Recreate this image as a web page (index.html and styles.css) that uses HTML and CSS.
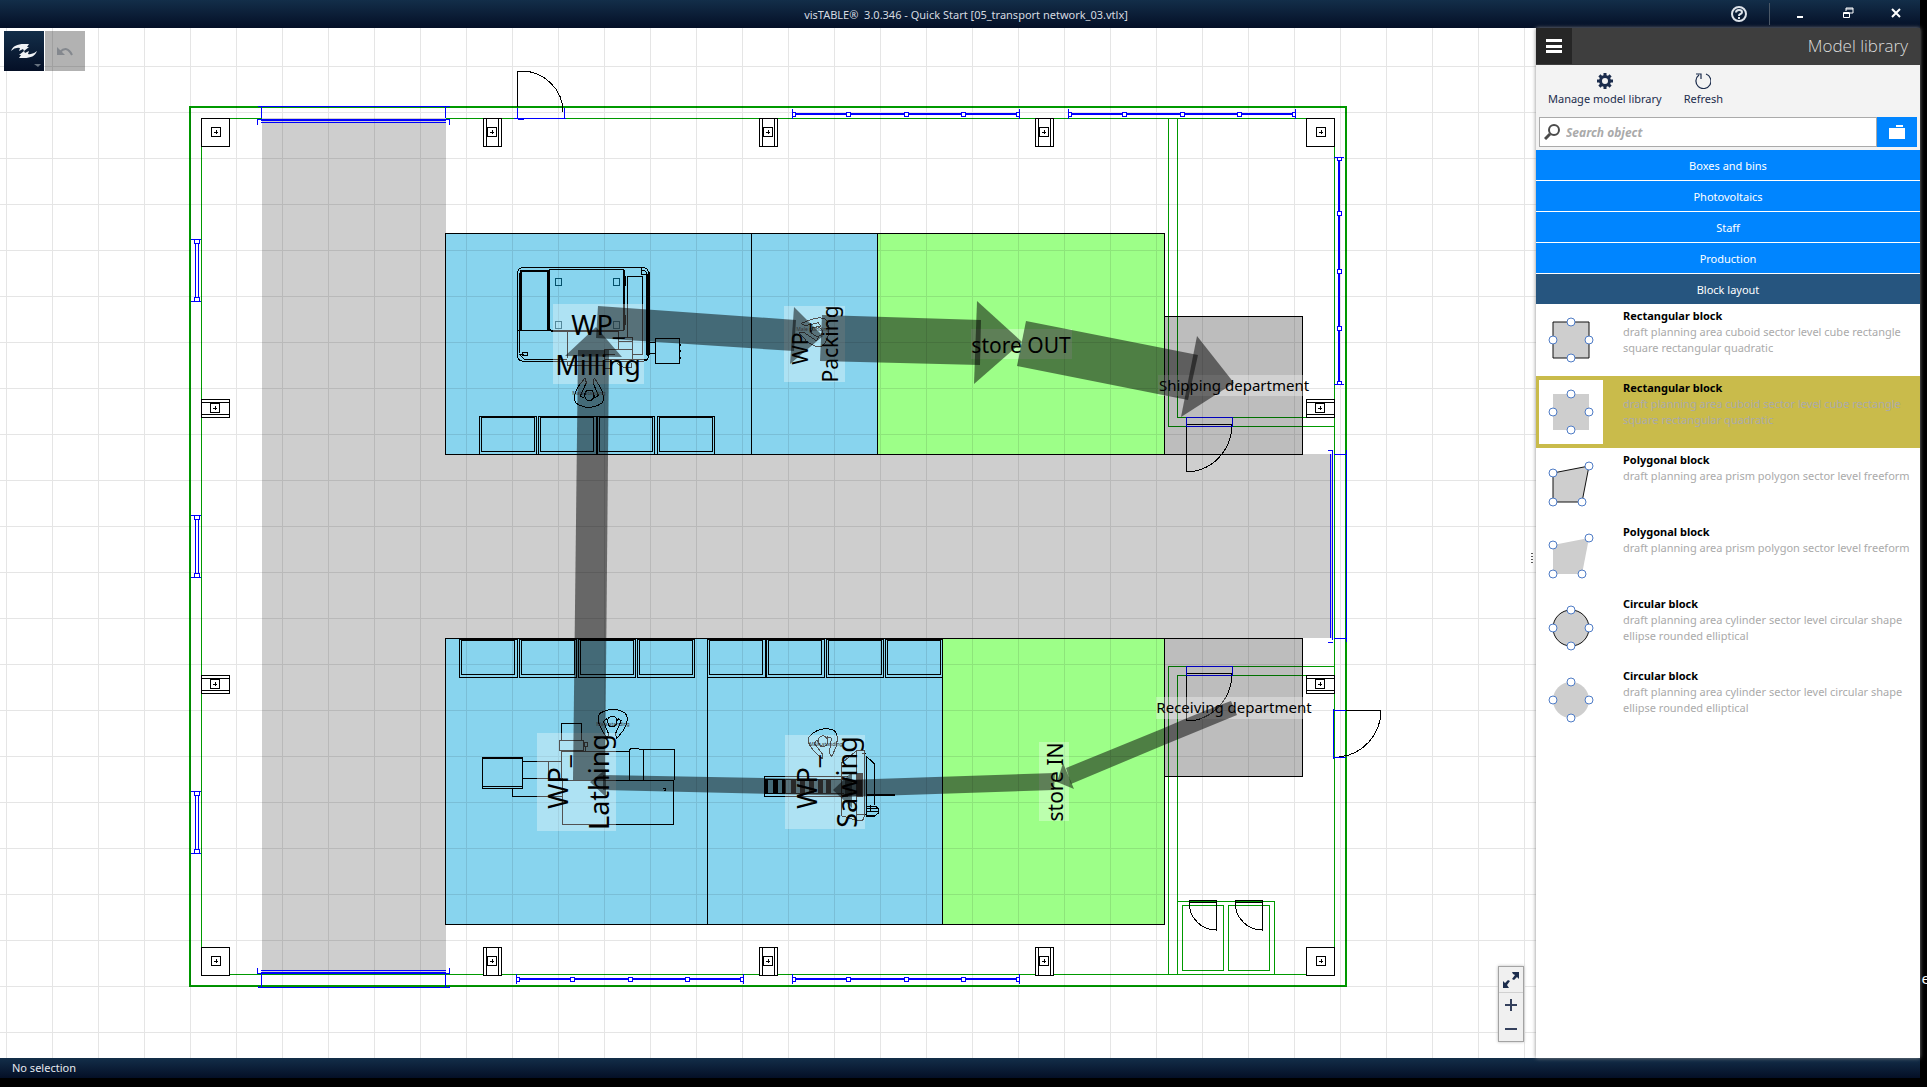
FILE: index.html
```html
<!DOCTYPE html>
<html lang="en">
<head>
    <meta charset="UTF-8">
    <title>visTABLE - Quick Start</title>
    <link rel="stylesheet" href="styles.css">
</head>
<body>
<div class="app">
    <header class="titlebar">
        <h1 class="title">visTABLE® &nbsp;3.0.346 - Quick Start [05_transport network_03.vtlx]</h1>
        <div class="window-buttons">
            <button class="help" aria-label="Help">
                <svg width="18" height="18" viewBox="0 0 18 18"><circle cx="9" cy="9" r="7" fill="none" stroke="#dde3ea" stroke-width="2"/><path d="M6 7.500Q6 5 9 5T12 7.300Q12 8.500 10 9.300Q9 9.700 9 11" fill="none" stroke="#dde3ea" stroke-width="2"/><rect x="8" y="12" width="2" height="2" fill="#dde3ea"/></svg>
            </button>
            <span class="divider"></span>
            <button class="win" aria-label="Minimize"><svg width="12" height="12"><path d="M3 9h6v2h-6z" fill="#fff"/></svg></button>
            <button class="win" aria-label="Restore"><svg width="12" height="12" fill="none" stroke="#fff"><path d="M4 4V1h7v5h-3M4 2h7M1.500 5.500h6v5h-6zM1 6.500h7"/></svg></button>
            <button class="win" aria-label="Close"><svg width="12" height="12"><path d="M2 2l8 8M10 2l-8 8" stroke="#fff" stroke-width="2"/></svg></button>
        </div>
    </header>

    <main class="workspace">
        <section class="canvas">
            <svg class="plan" width="100%" height="100%">
                <defs>
                    <pattern id="grid" x="6" y="20" width="46" height="46" patternUnits="userSpaceOnUse">
                        <path d="M0 0h46v1h-45v45h-1z" fill="#000" fill-opacity=".1"/>
                    </pattern>
                    <symbol id="core" overflow="visible"><rect x="-5" y="-5" width="9" height="9"/><path d="M-2 0h4M0 -2v4"/></symbol>
                    <symbol id="corner" overflow="visible"><rect x="-15" y="-14" width="28" height="28" fill="#fff"/><use href="#core"/></symbol>
                    <symbol id="post" overflow="visible"><rect x="-9" y="-14" width="18" height="28" fill="#fff"/><path d="M-6 -14v28M6 -14v28"/><use href="#core"/></symbol>
                    <symbol id="post-h" overflow="visible"><rect x="-14" y="-9" width="28" height="18" fill="#fff"/><path d="M-14 -6h28M-14 6h28"/><use href="#core"/></symbol>
                    <symbol id="window" overflow="visible">
                        <path d="M0 -5v10M227 -5v10"/><path d="M2 0h223" stroke-width="2"/>
                        <path d="M0 -2h3v4h-3zM54 -2h4v4h-4zM112 -2h4v4h-4zM169 -2h4v4h-4zM224 -2h3v4h-3z" fill="#fff"/>
                    </symbol>
                    <symbol id="window-s" overflow="visible"><path d="M-6 0h10M-6 62h10M-3 0v4h5v-4M-3 62v-4h5v4M-2 4h3v54h-3z"/></symbol>
                    <symbol id="person" overflow="visible"><path d="M32 0L12 25Q-8 60 6 76Q42 100 82 76Q96 60 76 25L60 0M32 0l4 14l-18 40l10 6l10 -25M60 0l-4 14l16 38l-10 8l-8 -25"/><ellipse cx="45" cy="52" rx="14" ry="16"/></symbol>
                    <symbol id="box" overflow="visible"><rect width="172" height="114"/><rect x="6" y="4" width="158" height="102"/></symbol>
                </defs>

                <g class="page" transform="translate(0 -28)">
                    <!-- walls -->
                    <g class="wall">
                        <rect x="190" y="107" width="1156" height="879" stroke-width="2"/>
                        <rect x="201" y="118" width="1133" height="856"/>
                        <path d="M1168 118V426H1334M1177 118V417H1334M1168 974V666H1334M1177 974V675H1334"/>
                        <path d="M1177 901H1274V974M1182 905h41v65h-41zM1228 905h41v65h-41z"/>
                    </g>
                    <path d="M1186 424V472A46 48 0 0 0 1232 424zM1186 673V721A46 48 0 0 0 1232 673z" class="ink"/>
                    <path d="M1186 417h46v9h-46zM1186 666h46v9h-46z" class="blue"/>

                    <!-- areas -->
                    <path d="M262 118H446V454H1333V638H446V974H262z" fill="#cecece"/>
                    <g class="area">
                        <rect x="445" y="233" width="306" height="221" class="work"/>
                        <rect x="751" y="233" width="126" height="221" class="work"/>
                        <rect x="877" y="233" width="287" height="221" class="store"/>
                        <rect x="1164" y="316" width="138" height="138" class="dept"/>
                        <rect x="445" y="638" width="262" height="286" class="work"/>
                        <rect x="707" y="638" width="235" height="286" class="work"/>
                        <rect x="942" y="638" width="222" height="286" class="store"/>
                        <rect x="1164" y="638" width="138" height="138" class="dept"/>
                    </g>
                    <path d="M1186 454V472A46 48 0 0 0 1222 454" class="ink"/>
                    <rect y="28" width="1536" height="1030" fill="url(#grid)"/>

                    <!-- gates -->
                    <g class="blue">
                        <path d="M258 107v-1h191v1M261 106v12M445 106v12M257 125v-6h192v6M261 122h185M261 120h185"/>
                        <path d="M257 968v5h192v-5M261 970h185M261 972h185M261 974v13M445 974v13M258 986v1h191v-1"/>
                        <path d="M1328 450h5M1334 454h12M1330 454v184M1332 450v190M1346 450v192M1328 642h5M1334 638h12"/>
                        <path d="M514 118h52M517 108v10M564 108v10M518 119h6"/>
                        <path d="M1333 709v50M1334 710h12M1334 757h12"/>
                        <use href="#window" x="792" y="114"/>
                        <use href="#window" x="1068" y="114"/>
                        <use href="#window" x="516" y="979"/>
                        <use href="#window" x="792" y="979"/>
                        <use href="#window" transform="translate(1339 157) rotate(90)"/>
                        <use href="#window-s" x="197" y="239"/>
                        <use href="#window-s" x="197" y="515"/>
                        <use href="#window-s" x="197" y="791"/>
                    </g>
                    <path d="M517 107V71H522A42 41 0 0 1 563 112M1346 710h35A46 47 0 0 1 1339 757" class="ink"/>
                    <path d="M1189 900h27v30A27 28 0 0 1 1189 902zM1235 900h27v30A27 28 0 0 1 1235 902zM1189 902h27M1235 902h27" class="ink"/>

                    <!-- pillars -->
                    <g class="ink">
                        <use href="#corner" x="216" y="132"/>
                        <use href="#post" x="492" y="132"/>
                        <use href="#post" x="768" y="132"/>
                        <use href="#post" x="1044" y="132"/>
                        <use href="#corner" x="1321" y="132"/>
                        <use href="#post-h" x="215" y="408"/>
                        <use href="#post-h" x="1320" y="408"/>
                        <use href="#post-h" x="215" y="684"/>
                        <use href="#post-h" x="1320" y="684"/>
                        <use href="#corner" x="216" y="961"/>
                        <use href="#post" x="492" y="961"/>
                        <use href="#post" x="768" y="961"/>
                        <use href="#post" x="1044" y="961"/>
                        <use href="#corner" x="1321" y="961"/>
                    </g>

                    <!-- milling -->
                    <svg x="430" y="220" width="460" height="270" viewBox="0 0 1380 810" class="machine">
                        <rect x="263" y="143" width="392" height="280" rx="14"/>
                        <path d="M270 150h82v182h-82zM273 153h78v178h-78zM262 332h96v-183h222v181h-222M267 160v240M282 403h-14l14 14h130M358 149v176l6 8h202M355 149v183M277 397h14v10h-14z"/>
                        <path d="M592 169h46v234h-30M592 169v183M635 143v20h20M635 150q14 0 17 17v240M648 160v245M657 155v250M583 150v180M587 168v30M587 285v30"/>
                        <path d="M412 333v80M566 330v58h41v-36h-24M566 365h40M524 388h82v30h-82zM524 404h30M412 422v14h110v10h20M606 418h45M560 430l20 12h24v-14"/>
                        <path d="M376 175h19v21h-19zM550 175h19v21h-19zM376 304h19v21h-19zM550 304h19v21h-19z" stroke="#04506a"/>
                        <rect x="676" y="355" width="73" height="75"/>
                        <path d="M657 367h19M657 401h19M751 371v6M751 390v6M751 410v6"/>
                        <use href="#person" x="433" y="474"/>
                        <use href="#person" transform="translate(1102 370) rotate(-80)"/>
                        <use href="#box" x="148" y="589"/>
                        <use href="#box" x="326" y="589"/>
                        <use href="#box" x="502" y="589"/>
                        <use href="#box" x="682" y="589"/>
                    </svg>

                    <!-- lathing and sawing -->
                    <svg x="430" y="620" width="520" height="320" viewBox="0 0 1560 960" class="machine">
                        <use href="#box" x="89" y="58"/>
                        <use href="#box" x="268" y="58"/>
                        <use href="#box" x="445" y="58"/>
                        <use href="#box" x="622" y="58"/>
                        <use href="#box" x="833" y="58"/>
                        <use href="#box" x="1010" y="58"/>
                        <use href="#box" x="1189" y="58"/>
                        <use href="#box" x="1366" y="58"/>
                        <path d="M157 412h121v93h-121zM157 415h121M157 500h121M278 424h117M278 475h120M247 505v24h150M356 424v50"/>
                        <path d="M394 360v-50h61v50M388 361h72v31h-72zM462 366h11v14h-11zM466 380v12M394 481v-87h204v87M598 394v-6q16 -6 32 0h104v93M640 388v93M397 481h334v132h-334zM699 505h8v7h-5"/>
                        <use href="#person" transform="translate(592 356) rotate(180)"/>
                        <use href="#person" transform="translate(1236 402) rotate(165)"/>
                        <path d="M1003 470h250M1003 477h240M1003 521h240M1003 529h250M1003 470v59M1234 425v162M1234 430l46 -38h22v20M1234 587l46 14h18l8 -20M1280 392v209M1302 412v170h-20M1308 408l24 22v126M1310 408v180M1296 400h12"/>
                        <path d="M1308 524h88" stroke-width="6"/>
                        <path d="M1003 478h10v42h-10zM1029 478h12v42h-12zM1056 478h10v42h-10zM1083 478h12v42h-12zM1110 478h12v42h-12zM1137 478h12v42h-12zM1164 478h12v42h-12zM1190 478h12v42h-12zM1283 460h13v70h-13z" fill="#000"/>
                        <path d="M1310 558h26l8 8v14l-10 8h-24zM1310 566h30M1310 574h34M1322 556v20M1310 586h26"/>
                    </svg>

                    <!-- label plates -->
                    <g fill="#fff" fill-opacity=".32">
                        <rect x="553" y="304" width="91" height="80"/>
                        <rect x="784" y="306" width="61" height="76"/>
                        <rect x="971" y="329" width="101" height="30"/>
                        <rect x="1158" y="375" width="145" height="21"/>
                        <rect x="537" y="733" width="79" height="98"/>
                        <rect x="785" y="735" width="80" height="94"/>
                        <rect x="1039" y="742" width="30" height="79"/>
                        <rect x="1156" y="697" width="147" height="22"/>
                    </g>

                    <!-- transport flows -->
                    <g class="flow">
                        <path d="M573 780L578 350H609L605 780z"/><path d="M565 356L596 327L622 357z"/>
                        <path d="M598 306L796 320L794 351L596 338z"/><path d="M794 307L823 336L790 364z"/>
                        <path d="M822 315L981 320L980 365L820 361z"/><path d="M977 301L1022 342L974 384z"/>
                        <path d="M1026 321L1198 355L1188 400L1017 366z"/><path d="M1197 336L1234 383L1181 417z"/>
                        <path d="M1231 701Q1200 712 1164 728L1066 768L1071 784L1164 745L1237 715z"/><path d="M1063 763L1057 782L1074 789z"/>
                        <path d="M1055 773L845 780V797L1054 790z"/><path d="M852 772L833 790L852 808z"/>
                        <path d="M862 780L603 775V790L862 796z"/><path d="M606 769L590 782L606 797z"/>
                    </g>

                    <g class="label tiny">
                        <text x="589" y="395">Male standing</text>
                        <text x="813" y="331">Male standing</text>
                        <text x="613" y="726">Male standing</text>
                        <text x="826" y="746">Male standing</text>
                    </g>
                    <g class="label large">
                        <text x="598" y="335">WP_</text>
                        <text x="598" y="375">Milling</text>
                        <text transform="translate(568 782) rotate(-90)">WP_</text>
                        <text transform="translate(609 782) rotate(-90)">Lathing</text>
                        <text transform="translate(817 782) rotate(-90)">WP_</text>
                        <text transform="translate(857 782) rotate(-90)">Sawing</text>
                    </g>
                    <g class="label medium">
                        <text transform="translate(808 344) rotate(-90)">WP_</text>
                        <text transform="translate(838 344) rotate(-90)">Packing</text>
                        <text x="1021" y="353">store OUT</text>
                        <text transform="translate(1063 782) rotate(-90)">store IN</text>
                    </g>
                    <g class="label small">
                        <text x="1234" y="391">Shipping department</text>
                        <text x="1234" y="713">Receiving department</text>
                    </g>
                </g>
            </svg>

            <div class="quick-tools">
                <button class="logo" aria-label="Main menu">
                    <svg width="40" height="40"><g id="swoosh"><path d="M7 20C9 15 13 13 20 13H25L23 16H25L20 20L19 18L15 20L16 17Q11 16 7 20z" fill="#f0f3f6"/></g><use href="#swoosh" transform="rotate(180 20 20)"/><path d="M30 33h7l-3 3z" fill="#66717f"/></svg>
                </button>
                <button class="undo" aria-label="Undo" disabled>
                    <svg width="40" height="40"><path d="M12 16v8h8z" fill="#84888e"/><path d="M15 21Q22 14 27 24" fill="none" stroke="#84888e" stroke-width="2"/></svg>
                </button>
            </div>

            <div class="zoom">
                <button aria-label="Zoom to fit"><svg width="18" height="18"><path d="M10 1h7v7l-2-2-3 3-2-1 3-4-2-1zM1 17v-7l2 2 3-3 2 1-3 4 2 3z" fill="#1b2c4c"/></svg></button>
                <button aria-label="Zoom in"><svg width="12" height="12"><path d="M5 0h2v5h5v2H7v5H5V7H0V5h5z" fill="#34405c"/></svg></button>
                <button aria-label="Zoom out"><svg width="12" height="12"><path d="M0 5h12v2H0z" fill="#34405c"/></svg></button>
            </div>
            <div class="grip"></div>
        </section>

        <aside class="library">
            <div class="library-head">
                <button class="menu" aria-label="Menu"><svg width="16" height="14"><path d="M0 0h16v3H0zM0 6h16v3H0zM0 11h16v3H0z" fill="#fff"/></svg></button>
                <h2>Model library</h2>
            </div>
            <div class="library-tools">
                <button>
                    <svg width="16" height="16" viewBox="-8 -8 16 16" fill="none" stroke="#1b2c4c"><circle r="4.500" stroke-width="3"/><path d="M0 -8v3M0 5v3M-8 0h3M5 0h3M-5.600 -5.600l2 2M3.600 3.600l2 2M5.600 -5.600l-2 2M-3.600 3.600l-2 2" stroke-width="3"/></svg>
                    Manage model library
                </button>
                <button>
                    <svg width="16" height="16" fill="none" stroke="#1b2c4c"><path d="M11 1A7.500 7.500 0 1 1 4 2M1 1h5v5" stroke-width="1.200"/></svg>
                    Refresh
                </button>
            </div>
            <div class="search">
                <div class="field">
                    <svg width="16" height="16" fill="none" stroke="#4b4b4b"><circle cx="10" cy="6" r="5" stroke-width="2"/><path d="M6 10l-5 5" stroke-width="3"/></svg>
                    <input type="text" placeholder="Search object" aria-label="Search object">
                </div>
                <button aria-label="Browse catalogues"><svg width="18" height="14"><path d="M8 0h7v2H8zM1 3h16v11H1z" fill="#fff"/></svg></button>
            </div>
            <nav class="categories">
                <button>Boxes and bins</button>
                <button>Photovoltaics</button>
                <button>Staff</button>
                <button>Production</button>
                <button class="open">Block layout</button>
            </nav>
            <ul class="items">
                <li>
                    <svg class="thumb"><path d="M14 14h36v36H14z" class="outlined"/><g class="dots"><circle cx="32" cy="14" r="4"/><circle cx="14" cy="32" r="4"/><circle cx="50" cy="32" r="4"/><circle cx="32" cy="50" r="4"/></g></svg>
                    <div><h3>Rectangular block</h3><p>draft planning area cuboid sector level cube rectangle square rectangular quadratic</p></div>
                </li>
                <li class="selected">
                    <svg class="thumb"><path d="M14 14h36v36H14z" class="plain"/><g class="dots"><circle cx="32" cy="14" r="4"/><circle cx="14" cy="32" r="4"/><circle cx="50" cy="32" r="4"/><circle cx="32" cy="50" r="4"/></g></svg>
                    <div><h3>Rectangular block</h3><p>draft planning area cuboid sector level cube rectangle square rectangular quadratic</p></div>
                </li>
                <li>
                    <svg class="thumb"><path d="M14 21L50 14L43 50H14z" class="outlined"/><g class="dots"><circle cx="14" cy="21" r="4"/><circle cx="50" cy="14" r="4"/><circle cx="43" cy="50" r="4"/><circle cx="14" cy="50" r="4"/></g></svg>
                    <div><h3>Polygonal block</h3><p>draft planning area prism polygon sector level freeform</p></div>
                </li>
                <li>
                    <svg class="thumb"><path d="M14 21L50 14L43 50H14z" class="plain"/><g class="dots"><circle cx="14" cy="21" r="4"/><circle cx="50" cy="14" r="4"/><circle cx="43" cy="50" r="4"/><circle cx="14" cy="50" r="4"/></g></svg>
                    <div><h3>Polygonal block</h3><p>draft planning area prism polygon sector level freeform</p></div>
                </li>
                <li>
                    <svg class="thumb"><circle cx="32" cy="32" r="18" class="outlined"/><g class="dots"><circle cx="32" cy="14" r="4"/><circle cx="14" cy="32" r="4"/><circle cx="50" cy="32" r="4"/><circle cx="32" cy="50" r="4"/></g></svg>
                    <div><h3>Circular block</h3><p>draft planning area cylinder sector level circular shape ellipse rounded elliptical</p></div>
                </li>
                <li>
                    <svg class="thumb"><circle cx="32" cy="32" r="18" class="plain"/><g class="dots"><circle cx="32" cy="14" r="4"/><circle cx="14" cy="32" r="4"/><circle cx="50" cy="32" r="4"/><circle cx="32" cy="50" r="4"/></g></svg>
                    <div><h3>Circular block</h3><p>draft planning area cylinder sector level circular shape ellipse rounded elliptical</p></div>
                </li>
            </ul>
        </aside>
    </main>

    <footer class="statusbar">No selection</footer>
</div>
<span class="behind">e</span>
</body>
</html>
```

FILE: styles.css
```css
* {
    box-sizing: border-box;
}
body {
    position: relative;
    height: 100vh;
    margin: 0;
    padding: 0 7px 9px 0;
    overflow: hidden;
    background: #000;
    font-family: "Noto Sans", "Open Sans", sans-serif;
    font-size: 11px;
}
button {
    display: flex;
    align-items: center;
    justify-content: center;
    padding: 0;
    border: none;
    background: none;
    font: inherit;
    cursor: pointer;
}
h1, h2, h3, p, ul {
    margin: 0;
    padding: 0;
}
.app {
    display: flex;
    flex-direction: column;
    height: 100%;
}
.behind {
    position: absolute;
    right: -3px;
    bottom: 99px;
    color: #fff;
    font-size: 15px;
    line-height: 20px;
}

/* title bar */
.titlebar {
    display: grid;
    grid-template-columns: 1fr auto 1fr;
    align-items: center;
    height: 28px;
    background: linear-gradient(#132e49, #040f26);
}
.title {
    grid-column: 2;
    padding-left: 12px;
    color: #d5dae0;
    font-size: 11px;
    font-weight: 400;
}
.window-buttons {
    display: flex;
    justify-content: flex-end;
    height: 28px;
}
.help {
    width: 60px;
}
.divider {
    width: 1px;
    height: 22px;
    margin: 3px 6px 3px 0;
    background: #4a5766;
}
.win {
    width: 48px;
    height: 26px;
}

/* plan */
.workspace {
    display: flex;
    flex: 1;
    min-height: 0;
}
.canvas {
    position: relative;
    flex: 1;
    min-width: 0;
    overflow: hidden;
    background: #fff;
}
.plan {
    display: block;
}
.page {
    shape-rendering: crispEdges;
}
.wall {
    fill: none;
    stroke: #090;
}
.ink {
    fill: none;
    stroke: #000;
}
.blue {
    fill: none;
    stroke: #00f;
}
.area rect {
    stroke: #000;
}
.area .work {
    fill: #88d4ee;
}
.area .store {
    fill: #9dff88;
}
.area .dept {
    fill: rgba(0, 0, 0, 0.26);
}
.machine {
    fill: none;
    stroke: #000;
    stroke-width: 3;
}
.flow {
    fill: #000;
    fill-opacity: 0.5;
    shape-rendering: auto;
}
.label {
    fill: #000;
    text-anchor: middle;
}
.large {
    font-size: 27px;
}
.medium {
    font-size: 21px;
}
.small {
    font-size: 15px;
}
.tiny {
    fill: #333;
    font-size: 5px;
}
.quick-tools {
    position: absolute;
    top: 3px;
    left: 4px;
    display: flex;
    gap: 1px;
}
.quick-tools button {
    width: 40px;
    height: 40px;
}
.quick-tools .logo {
    background: linear-gradient(#132e49, #040f26);
}
.quick-tools .undo {
    background: rgba(0, 0, 0, 0.3);
}
.zoom {
    position: absolute;
    right: 12px;
    bottom: 16px;
    width: 26px;
    border: 1px solid #a3a3a3;
    background: #f0f0f0;
    box-shadow: 0 0 3px #bbb;
}
.zoom button {
    width: 24px;
    height: 24px;
}
.zoom button:first-child {
    height: 26px;
    border-bottom: 1px solid #d0d0d0;
}
.grip {
    position: absolute;
    top: 525px;
    right: 3px;
    width: 2px;
    height: 10px;
    background: repeating-linear-gradient(#555 0 1px, #fff 1px 3px);
}

/* model library */
.library {
    position: relative;
    width: 384px;
    background: #fff;
    box-shadow: 0 0 4px #888;
}
.library-head {
    display: flex;
    align-items: flex-start;
    justify-content: space-between;
    height: 37px;
    padding-right: 12px;
    background: #3e3e3e;
}
.library-head .menu {
    width: 36px;
    height: 36px;
    background: #262626;
}
.library-head h2 {
    color: #ddd;
    font-family: "Open Sans", sans-serif;
    font-size: 17px;
    font-weight: 300;
    line-height: 36px;
}
.library-tools {
    display: flex;
    gap: 22px;
    height: 52px;
    padding: 8px 12px 0;
    background: #f3f3f3;
}
.library-tools button {
    flex-direction: column;
    justify-content: flex-start;
    gap: 2px;
    color: #1b2c4c;
    line-height: 16px;
}
.search {
    display: flex;
    height: 33px;
    padding: 0 3px 3px;
    background: #f3f3f3;
}
.field {
    display: flex;
    flex: 1;
    align-items: center;
    gap: 6px;
    padding-left: 4px;
    border: 1px solid #aaa;
    background: #fff;
}
.field input {
    flex: 1;
    min-width: 0;
    padding: 0;
    border: none;
    outline: none;
    font: inherit;
    font-size: 12px;
}
.field input::placeholder {
    color: #aaa;
    font-style: italic;
    font-weight: 700;
}
.search button {
    width: 40px;
    background: #0085ff;
}
.categories {
    display: flex;
    flex-direction: column;
    gap: 1px;
}
.categories button {
    height: 30px;
    background: #0085ff;
    color: #fff;
}
.categories .open {
    background: #26557f;
}
.items {
    list-style: none;
}
.items li {
    display: flex;
    gap: 20px;
    height: 72px;
    padding: 4px 0 0 3px;
}
.items .selected {
    background: #c9bb4b;
}
.items .selected .thumb {
    background: #fff;
}
.thumb {
    flex: none;
    width: 64px;
    height: 64px;
}
.items h3 {
    font-size: 11px;
    font-weight: 700;
    line-height: 16px;
}
.items p {
    color: #aaa;
    line-height: 16px;
}
.outlined {
    fill: #cecece;
    stroke: #111;
}
.plain {
    fill: #cecece;
}
.dots {
    fill: #fff;
    stroke: #4f7cc6;
}

.statusbar {
    height: 20px;
    padding-left: 12px;
    background: linear-gradient(#132e49, #040f26);
    color: #e4e8ee;
    line-height: 20px;
}
```
